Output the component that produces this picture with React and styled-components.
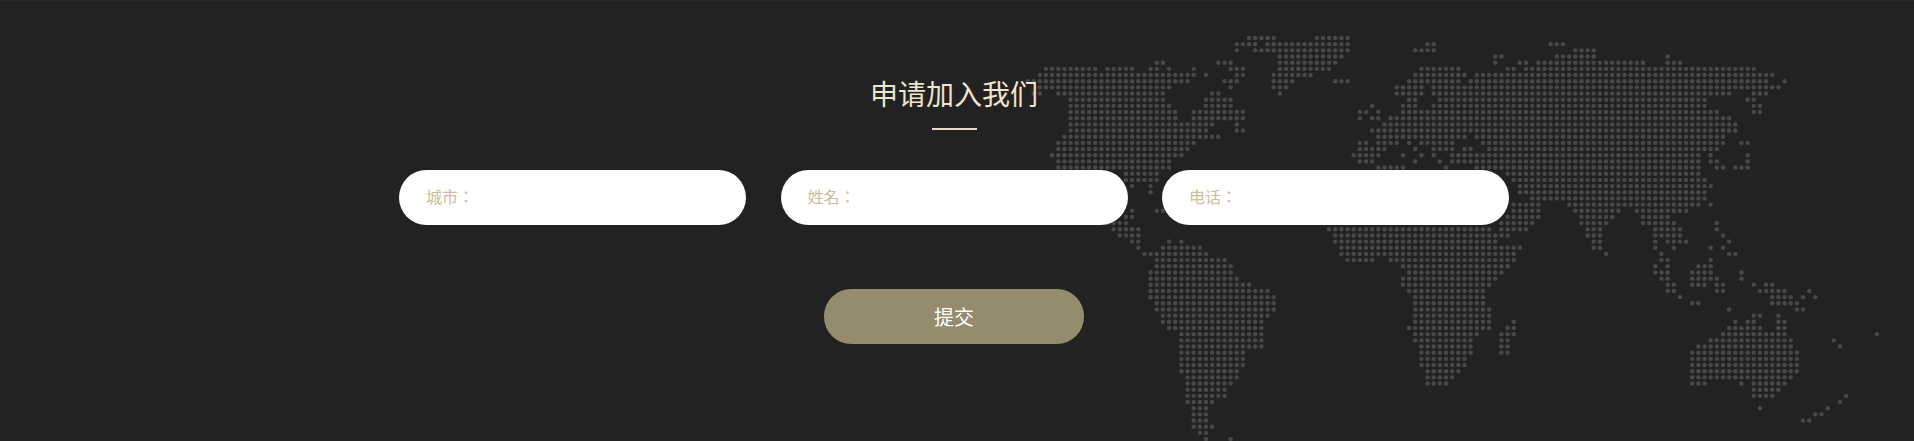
import React from 'react';
import styled, { createGlobalStyle } from 'styled-components';

const Global = createGlobalStyle`
  html, body { margin: 0; padding: 0; background: #222; overflow: hidden; }
  body { font-family: "Noto Sans CJK SC", "Liberation Sans", sans-serif; }
  * { box-sizing: border-box; }
`;

const Section = styled.section`
  position: relative;
  height: 441px;
  overflow: hidden;
  background: #222222;
  border-top: 1px solid #2a2a2a;
  display: flex;
  flex-direction: column;
  align-items: center;
  padding: 72px 6px 0 0;
`;
const MapArt = styled.svg`
  position: absolute;
  left: 0;
  top: -1px;
  width: 1914px;
  height: 441px;
  fill: #484848;
`;
const Title = styled.h2`
  position: relative;
  margin: 0;
  font-size: 28px;
  line-height: 40px;
  font-weight: 400;
  color: #efe5cb;
`;
const Rule = styled.div`
  position: relative;
  width: 45px;
  height: 2px;
  margin-top: 15px;
  background: #e8dec4;
`;
const Fields = styled.form`
  position: relative;
  display: grid;
  grid-template-columns: repeat(3, 1fr);
  gap: 34.5px;
  width: 1110px;
  margin-top: 40px;
`;
const Field = styled.input`
  height: 55px;
  width: 100%;
  border: 0;
  outline: 0;
  border-radius: 27.5px;
  background: #fff;
  padding: 0 27px 4px;
  font: 400 16px "Noto Sans CJK TC", "Noto Sans CJK SC", sans-serif;
  color: #333;
  &::placeholder { color: #c9bd9c; opacity: 1; }
`;
const Submit = styled.button`
  position: relative;
  width: 260px;
  height: 55px;
  margin-top: 64px;
  border: 0;
  border-radius: 27px;
  background: #958b6d;
  color: #fff;
  font: 400 20px "Noto Sans CJK SC", sans-serif;
`;

const Z3 = [1020, 20, [
[54,687,763,890,985],[72,650,706,743,985],[91,650,650,706,985],[109,780,965],
[128,410,430,595,635,780,945],[147,78,228,262,340,392,410,447,447,521,521,632,670,780,930],
[165,60,520,558,558,650,670,762,875],[184,22,40,60,505,613,650,762,820,945,985],
[203,60,450,632,632,762,800],[221,40,60,115,430,577,595,780,780],[240,152,430,558,632],
[258,152,450,558,632],[276,152,468,521,670],[295,152,468,521,670],[313,152,580,650,650],
[332,152,560,650,670],[350,133,600],[369,115,520],[387,115,505],[406,97,487],[424,115,450],[443,115,450],
[461,320,415],[480,320,415],[498,335,335,392,392],[517,392,392],[573,335,335,410,430],[591,320,335],[610,225,320],[628,280,360]
]];
const Z4 = [1340, 20, [
[54,5,22],[72,5,22,262,282,632,670],[91,5,22,225,282,705,762],[109,5,5,467,485,650,762,985,985],
[128,467,467,540,558,595,910,985,1022],[147,243,357,503,525,558,1245],[165,225,375,410,1300],
[184,5,22,207,357,392,1282,1335,1335],[203,170,245,280,1318],[221,170,245,280,1170,1243,1280],
[240,207,225,298,1100,1225,1245],[258,97,97,187,225,280,1100,1243,1262],[276,60,78,115,115,187,1135,1243,1262],
[295,60,60,97,115,152,1170],[313,133,1170,1187,1187],[332,97,1190],[350,115,355,375,375,410,1157],
[369,60,78,115,170,207,207,243,340,428,1157,1205,1225],[387,60,133,225,225,280,340,375,392,447,1135],
[406,42,115,190,190,245,245,282,282,337,1078,1115,1115,1225,1225],
[424,60,97,225,225,300,300,337,1078,1115,1135,1225,1225],[443,115,190,318,318,410,1078,1135,1150,1187,1225],
[461,505,1078],[480,520,1098],[498,540,1115],[517,540,1098],[535,575,1098],[554,520,600,687,1078,1118,1118],
[573,520,600,705,835,890,1042],[591,500,600,725,820,908,985],[610,500,580,725,800,908,1005,1133,1133],
[628,520,560,745,780,945,1000,1133,1133]
]];
const Z5 = [1080, 220, [
[10,120,140,1265,1340],[28,102,177,745,1220,1265,1340],[47,120,177,765,1285],[65,158,177,267,267,305,305,765,1250],
[83,177,177,245,360,785,1325],[101,195,380,785,1305],[120,230,437,800,880,930,1305],[138,230,455,968,1285],
[157,212,455,985,1268],[175,212,475,968,1250],[194,212,512,968,1230],[212,212,565,985,1212],[231,212,585,1005,1212],
[249,230,585,1005,1212],[268,230,585,1005,1230],[286,248,565,1005,1230],[305,248,548,1005,1230,1303,1303],
[323,267,548,988,1230,1285,1303],[342,305,548,1005,1192,1265,1303],[360,305,548,1005,1175,1265,1285],
[379,305,548,1023,1175,1265,1285],[397,305,492,1023,1175,1265,1285],[416,305,492,1023,1157],[434,305,492,1023,1157],
[453,305,475,1042,1138],[472,323,475,1042,1118],[490,323,455,1042,1100],[509,323,437],[527,323,437],[546,323,400],
[565,342,380],[583,342,380],[602,342,380],[620,342,400],[638,360,380],[657,380,380,453,453]
]];
const Z6 = [1500, 220, [
[10,5,100,245,320,430,525,652,652],[28,5,80,263,300,467,540,652,652],[47,5,22,263,300,467,540,670,670],
[65,282,300,467,467,505,560,690,690],[83,5,60,282,300,467,467,523,523,632,632,675,675],
[101,5,42,318,318,485,485,690,705],[120,5,42,485,505,632,632],[138,5,22,467,467,505,505,597,632],
[157,5,5,467,505,578,632,726,726],[175,485,505,578,652,726,726],[194,505,523,578,615,652,670,764,764,800,818],
[212,505,523,652,670,782,855,930,930],[231,540,540,818,875,912,912,945,945],[249,578,597,818,893],
[268,688,688,893,912],[286,764,782,838,838],[305,42,42,708,708,745,764,838,855],[323,23,42,688,782,838,855],
[342,5,42,670,855,1130,1130],[360,5,23,632,875,1003,1003],[379,5,23,597,875,1020,1020],[397,5,23,578,893],
[416,578,893],[434,578,893],[453,578,893],[472,578,875],[490,578,615,726,726,764,855],[509,764,838],
[527,764,820,1040,1040],[546,1020,1020],[564,782,782,985,985],[582,947,965],[602,912,928]
]];

const X0 = 1027.5, PX = 6.155, Y0 = 38, PY = 6.17;
function buildDots() {
  const seen = new Set();
  const dots = [];
  [Z3, Z4, Z5, Z6].forEach(([ox, oy, rows]) => {
    rows.forEach(([cy, ...runs]) => {
      const r = Math.round((oy + cy / 3 - Y0) / PY);
      for (let i = 0; i < runs.length; i += 2) {
        const a = Math.round((ox + runs[i] / 3 - X0) / PX);
        const b = Math.round((ox + runs[i + 1] / 3 - X0) / PX);
        for (let c = a; c <= b; c++) {
          const k = r + ':' + c;
          if (!seen.has(k)) { seen.add(k); dots.push([c, r]); }
        }
      }
    });
  });
  return dots;
}
const DOTS = buildDots();

export default function App() {
  return (
    <>
      <Global />
      <Section>
        <MapArt viewBox="0 0 1914 441" aria-hidden="true">
          {DOTS.map(([c, r]) => (
            <circle key={r + ':' + c} cx={X0 + c * PX} cy={Y0 + r * PY} r="2.2" />
          ))}
        </MapArt>
        <Title>申请加入我们</Title>
        <Rule />
        <Fields onSubmit={(e) => e.preventDefault()}>
          <Field placeholder="城市：" />
          <Field placeholder="姓名：" />
          <Field placeholder="电话：" />
        </Fields>
        <Submit type="button">提交</Submit>
      </Section>
    </>
  );
}
